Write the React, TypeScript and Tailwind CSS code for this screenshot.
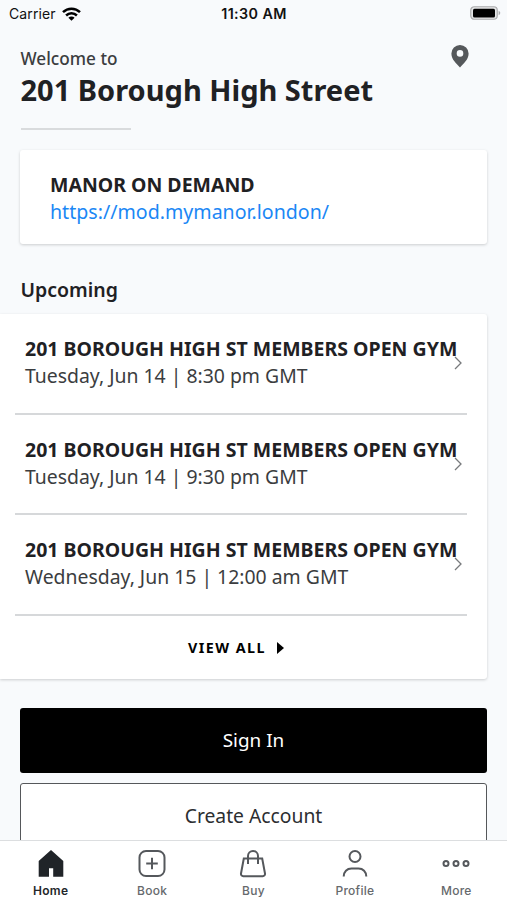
import type { ReactNode } from "react";

const CLASSES = [
  { title: "201 BOROUGH HIGH ST MEMBERS OPEN GYM", time: "Tuesday, Jun 14 | 8:30 pm GMT" },
  { title: "201 BOROUGH HIGH ST MEMBERS OPEN GYM", time: "Tuesday, Jun 14 | 9:30 pm GMT" },
  { title: "201 BOROUGH HIGH ST MEMBERS OPEN GYM", time: "Wednesday, Jun 15 | 12:00 am GMT" },
];

export default function App() {
  return (
    <div className="flex h-[900px] w-[507px] flex-col overflow-hidden bg-[#f8fafc] font-['Noto_Sans',sans-serif] text-[#1f2124]">
      <StatusBar />
      <main className="min-h-0 flex-1 overflow-hidden">
        <Header />
        <section className="mx-5 mt-5 flex h-[94px] flex-col rounded-[3px] bg-white pl-[30px] pt-[21px] shadow-[0_1px_3px_rgba(0,0,0,0.18)]">
          <h2 className="text-[19.5px] font-bold leading-[27px]">MANOR ON DEMAND</h2>
          <a href="https://mod.mymanor.london/" className="text-[19.6px] leading-[27px] text-[#1b87f5]">
            https://mod.mymanor.london/
          </a>
        </section>
        <h2 className="ml-[20.5px] mt-8 text-[19.5px] font-semibold leading-[28px]">Upcoming</h2>
        <Upcoming />
        <div className="mx-5 mt-[29px] flex flex-col gap-[10px]">
          <button className="h-[65px] rounded-[3px] bg-black text-[18.9px] text-white">Sign In</button>
          <button className="h-[67px] rounded-[3px] border border-[#55575a] bg-white text-[19.3px] text-[#2c2e31]">
            Create Account
          </button>
        </div>
      </main>
      <TabBar />
    </div>
  );
}

function StatusBar() {
  return (
    <div className="grid h-7 shrink-0 grid-cols-3 items-center pl-[9px] pr-[6px] font-['Inter',sans-serif] text-[14px] text-[#111]">
      <div className="-mt-px flex items-center gap-[6px]">
        <span className="tracking-[0.1px]">Carrier</span>
        <svg width="19" height="14" viewBox="0 0 19 14" fill="none" stroke="#000" strokeWidth="2.5">
          <path d="M1 5.2a12.2 12.2 0 0 1 17 0" />
          <path d="M4.1 8.5a7.7 7.7 0 0 1 10.8 0" />
          <path d="M9.5 13.8 6.4 10.7a4.4 4.4 0 0 1 6.2 0z" fill="#000" stroke="none" />
        </svg>
      </div>
      <span className="-ml-[2px] text-center text-[14.3px] font-semibold tracking-[0.4px]">11:30 AM</span>
      <svg className="-mt-[2px] ml-auto" width="31" height="14" viewBox="0 0 31 14">
        <rect x="0.75" y="0.75" width="26.5" height="12.5" rx="3.5" fill="#e4e5e6" stroke="#aaabad" strokeWidth="1.2" />
        <rect x="3" y="2.7" width="22" height="8.8" rx="1.5" fill="#000" />
        <path d="M28.6 4.8c2.2.8 2.2 3.6 0 4.4z" fill="#aaabad" />
      </svg>
    </div>
  );
}

function Header() {
  return (
    <header className="mx-[20.5px] pt-[17px]">
      <div className="flex items-start justify-between">
        <div>
          <p className="text-[17.2px] font-medium leading-[28px] text-[#3b3d40]">Welcome to</p>
          <h1 className="text-[29px] font-bold leading-[34px]">201 Borough High Street</h1>
        </div>
        <svg className="mr-[17.5px]" width="18" height="23" viewBox="0 0 18 23" fill="#55585b">
          <path
            fillRule="evenodd"
            d="M9 0a8.6 8.6 0 0 0-8.6 8.7C.4 14.5 5.6 18.6 9 22.5c3.4-3.9 8.6-8 8.6-13.8A8.6 8.6 0 0 0 9 0zm0 5.1a3.3 3.3 0 1 1 0 6.6 3.3 3.3 0 0 1 0-6.6z"
          />
        </svg>
      </div>
      <div className="mt-[21px] h-[2px] w-[110px] bg-[#d9dbdd]" />
    </header>
  );
}

function Upcoming() {
  return (
    <section className="mr-5 mt-[10px] h-[365px] rounded-r-[3px] bg-white pl-[15px] pr-5 shadow-[0_1px_3px_rgba(0,0,0,0.18)]">
      {CLASSES.map((c) => (
        <div key={c.time} className="flex h-[100.5px] items-start border-b-2 border-[#d6d8da] pl-[10px] pt-[21px]">
          <div className="w-[432px] shrink-0 whitespace-nowrap leading-[27px]">
            <h3 className="text-[19.53px] font-bold">{c.title}</h3>
            <p className="text-[19.4px] text-[#3b3d40]">{c.time}</p>
          </div>
          <svg className="-ml-[3px] mt-[21px] shrink-0" width="8" height="14" viewBox="0 0 8 14" fill="none" stroke="#77797c" strokeWidth="1.3">
            <path d="M1 1l6 6-6 6" />
          </svg>
        </div>
      ))}
      <div className="flex h-[64px] items-center justify-center gap-[11px] pr-[10px] text-[14.3px] font-bold tracking-[1.45px] text-black">
        VIEW ALL
        <svg width="7" height="12" viewBox="0 0 7 12">
          <path d="M0 0l7 6-7 6z" />
        </svg>
      </div>
    </section>
  );
}

function Tab({ label, active, children }: { label: string; active?: boolean; children: ReactNode }) {
  return (
    <div className={"flex flex-col items-center gap-[4px] pt-[8px] " + (active ? "font-semibold text-[#24272a]" : "font-medium text-[#66696c]")}>
      <svg width="30" height="30" viewBox="0 0 30 30" fill="none" stroke="#55585c" strokeWidth="2">
        {children}
      </svg>
      <span className="text-[12px] leading-[16px] tracking-[0.25px]">{label}</span>
    </div>
  );
}

function TabBar() {
  return (
    <nav className="grid h-[60px] shrink-0 grid-cols-5 border-t border-[#dcdee0] bg-white font-['Inter',sans-serif]">
      <Tab label="Home" active>
        <path d="M15 1 27.3 12V27.8H17.2V19.3H13V27.8H2.7V12z" fill="#202428" stroke="none" />
      </Tab>
      <Tab label="Book">
        <rect x="2.5" y="2" width="25" height="25" rx="6.5" />
        <path d="M15 8.7v11.6M9.2 14.5h11.6" />
      </Tab>
      <Tab label="Buy">
        <path d="M5.8 9.5h18.4l2.8 15a2.3 2.3 0 0 1-2.3 2.7H5.3A2.3 2.3 0 0 1 3 24.5z" />
        <path d="M10 15V7a5 5 0 0 1 10 0v8" />
      </Tab>
      <Tab label="Profile">
        <circle cx="15" cy="7.5" r="5.5" />
        <path d="M3.700 27.500c0-4.800 3.300-8 7.800-8h7c4.500 0 7.800 3.200 7.800 8" />
      </Tab>
      <Tab label="More">
        <circle cx="5" cy="14.5" r="2.500" />
        <circle cx="15" cy="14.5" r="2.500" />
        <circle cx="25" cy="14.5" r="2.500" />
      </Tab>
    </nav>
  );
}
